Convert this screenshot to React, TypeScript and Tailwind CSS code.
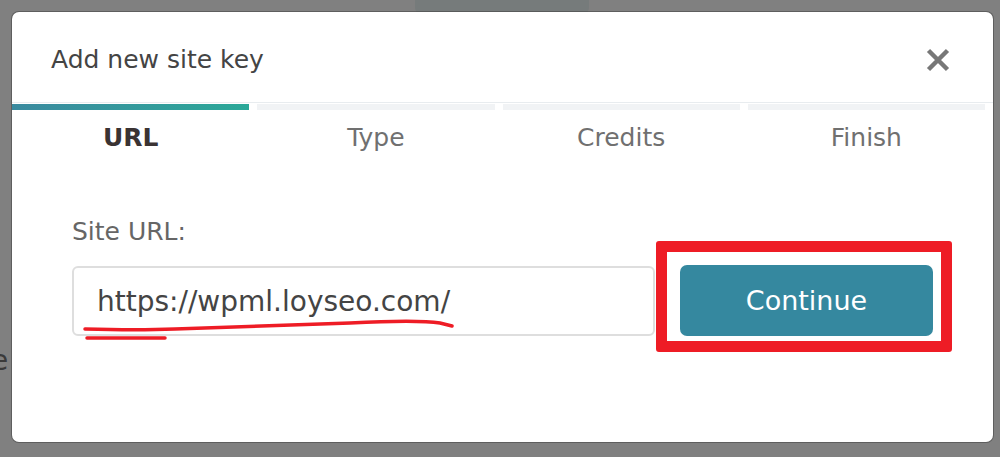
import React from "react";

const steps = ["URL", "Type", "Credits", "Finish"];

const App = () => {
  return (
    <div
      className="relative h-[457px] w-[1000px] overflow-hidden bg-[#808080]"
      style={{ fontFamily: '"DejaVu Sans", Verdana, sans-serif' }}
    >
      {/* page behind the overlay */}
      <div className="absolute left-[415px] top-0 h-[14px] w-[174px] rounded-b-[6px] bg-[#767b7b]"></div>
      <div className="absolute left-[-9px] top-[340px] text-[28px] text-[#3a3a3a]">e</div>

      {/* modal */}
      <div className="relative ml-[12px] mt-[12px] flex h-[430px] w-[981px] flex-col rounded-[7px] bg-white shadow-[0_0_0_1px_rgba(60,60,60,0.5)]">
        {/* header */}
        <div className="flex h-[91px] items-center justify-between border-b border-[#e8ecef] pl-[39px] pr-[43px] pt-[6px]">
          <h2 className="text-[25px] text-[#444]">Add new site key</h2>
          <button className="flex h-[24px] w-[24px] items-center justify-center">
            <svg width="24" height="24" viewBox="0 0 24 24">
              <path
                d="M2.5 2.5 L21.5 21.5 M21.5 2.5 L2.5 21.5"
                stroke="#777"
                strokeWidth="4.5"
                strokeLinecap="butt"
              />
            </svg>
          </button>
        </div>

        {/* progress steps */}
        <div className="mt-[1px] grid grid-cols-4">
          {steps.map((s, i) => (
            <div key={s} className="pr-[8px]">
              <div
                className={
                  i === 0
                    ? "h-[6px] bg-gradient-to-r from-[#3a8a9f] to-[#2aa898]"
                    : "h-[6px] bg-[#f1f3f5]"
                }
              ></div>
              <div
                className={
                  i === 0
                    ? "pt-[10px] text-center text-[25px] font-bold leading-[36px] text-[#3a3333]"
                    : "pt-[10px] text-center text-[25px] leading-[36px] text-[#707070]"
                }
              >
                {s}
              </div>
            </div>
          ))}
        </div>

        {/* body */}
        <div className="px-[60px] pt-[61px]">
          <label className="block text-[25px] leading-[30px] text-[#666]">Site URL:</label>
          <div className="mt-[18px] flex items-center gap-[25px]">
            <div className="flex h-[70px] flex-1 items-center rounded-[6px] border-2 border-[#dedede] pl-[23px] pt-[2px] text-[28px] text-[#444]">
              https://wpml.loyseo.com/
            </div>
            <button className="h-[71px] w-[253px] rounded-[7px] bg-[#35889f] pt-[2px] text-[27px] text-white">
              Continue
            </button>
          </div>
        </div>
      </div>

      {/* annotations */}
      <div className="pointer-events-none absolute left-[656px] top-[241px] h-[111px] w-[296px] rounded-[3px] border-[11px] border-[#ee1c25]"></div>
      <svg className="pointer-events-none absolute left-0 top-0" width="1000" height="457">
        <path
          d="M85 329 C120 330 150 330 175 329 C240 327 300 325 350 323 C390 321 420 320 440 323 L452 326"
          stroke="#ee1c25"
          strokeWidth="3.5"
          fill="none"
          strokeLinecap="round"
        />
        <path d="M87 338 L165 338" stroke="#ee1c25" strokeWidth="3.5" strokeLinecap="round" />
      </svg>
    </div>
  );
};

export default App;
